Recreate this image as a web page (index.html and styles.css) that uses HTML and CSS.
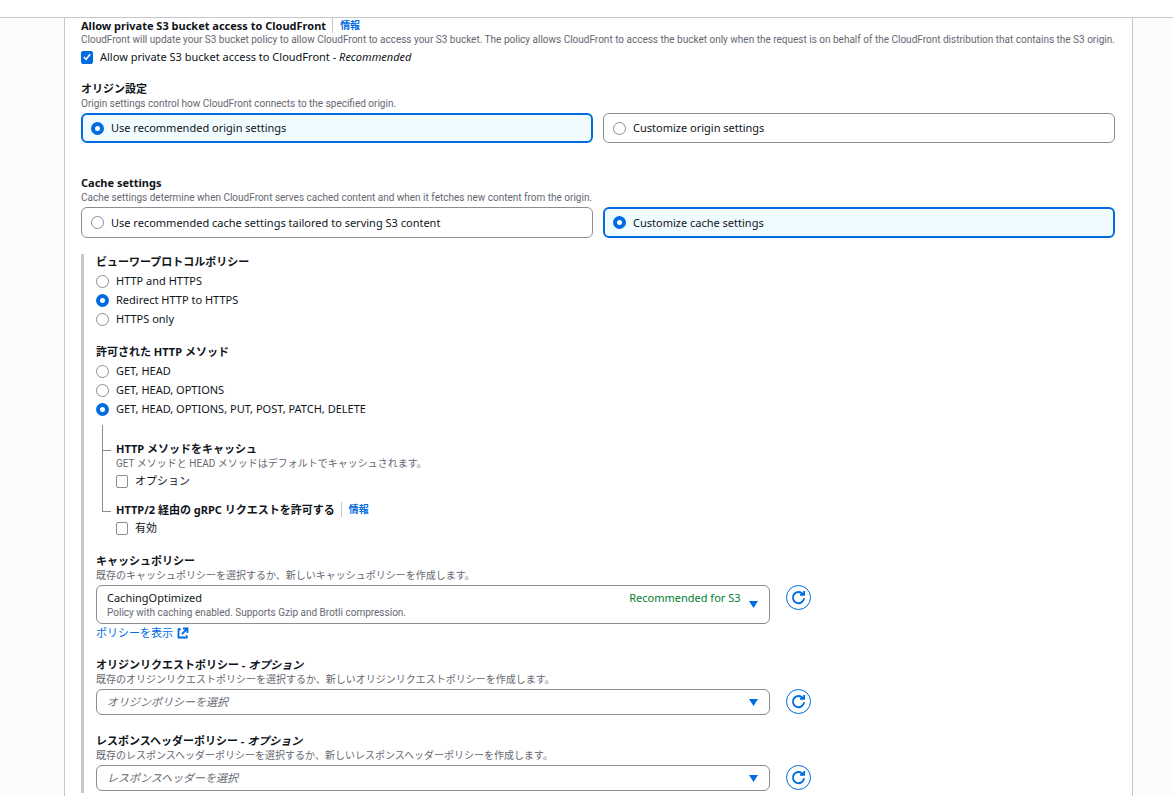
FILE: index.html
```html
<!DOCTYPE html>
<html lang="ja">
<head>
<meta charset="utf-8">
<meta name="viewport" content="width=device-width, initial-scale=1">
<title>CloudFront</title>
<link rel="stylesheet" href="styles.css">
</head>
<body>
<svg class="sprite" aria-hidden="true">
  <symbol id="refresh" viewBox="0 0 16 16"><path d="M14 8.8A6 6 0 1 1 12.6 4.2L14 5M14 1V5.2H9.6" fill="none" stroke="currentColor" stroke-width="2"/></symbol>
  <symbol id="external" viewBox="0 0 16 16"><path d="M5 3H2v11h11v-3M8 2h6v6M14 2L6.5 9.5" fill="none" stroke="currentColor" stroke-width="2.4"/></symbol>
</svg>
<header class="topbar"></header>
<main class="panel">
  <section class="field">
    <div class="heading"><h2 class="title">Allow private S3 bucket access to CloudFront</h2><a class="info" href="#">情報</a></div>
    <p class="desc">CloudFront will update your S3 bucket policy to allow CloudFront to access your S3 bucket. The policy allows CloudFront to access the bucket only when the request is on behalf of the CloudFront distribution that contains the S3 origin.</p>
    <label class="choice control"><input class="check" type="checkbox" checked><span>Allow private S3 bucket access to CloudFront - <em>Recommended</em></span></label>
  </section>

  <section class="field">
    <h2 class="title">オリジン設定</h2>
    <p class="desc">Origin settings control how CloudFront connects to the specified origin.</p>
    <div class="tiles control">
      <label class="tile choice tile-on"><input class="radio" type="radio" name="origin" checked><span>Use recommended origin settings</span></label>
      <label class="tile choice"><input class="radio" type="radio" name="origin"><span>Customize origin settings</span></label>
    </div>
  </section>

  <section class="field field-cache">
    <h2 class="title">Cache settings</h2>
    <p class="desc">Cache settings determine when CloudFront serves cached content and when it fetches new content from the origin.</p>
    <div class="tiles control">
      <label class="tile choice"><input class="radio" type="radio" name="cache"><span>Use recommended cache settings tailored to serving S3 content</span></label>
      <label class="tile choice tile-on"><input class="radio" type="radio" name="cache" checked><span>Customize cache settings</span></label>
    </div>
  </section>

  <div class="nested">
    <section class="field">
      <h3 class="title">ビューワープロトコルポリシー</h3>
      <div class="options control">
        <label class="choice"><input class="radio" type="radio" name="viewer"><span>HTTP and HTTPS</span></label>
        <label class="choice"><input class="radio" type="radio" name="viewer" checked><span>Redirect HTTP to HTTPS</span></label>
        <label class="choice"><input class="radio" type="radio" name="viewer"><span>HTTPS only</span></label>
      </div>
    </section>

    <section class="field">
      <h3 class="title">許可された HTTP メソッド</h3>
      <div class="options control">
        <label class="choice"><input class="radio" type="radio" name="method"><span>GET, HEAD</span></label>
        <label class="choice"><input class="radio" type="radio" name="method"><span>GET, HEAD, OPTIONS</span></label>
        <label class="choice"><input class="radio" type="radio" name="method" checked><span>GET, HEAD, OPTIONS, PUT, POST, PATCH, DELETE</span></label>
      </div>
      <ul class="tree">
        <li class="branch">
          <h4 class="title">HTTP メソッドをキャッシュ</h4>
          <p class="desc">GET メソッドと HEAD メソッドはデフォルトでキャッシュされます。</p>
          <label class="choice control"><input class="check" type="checkbox"><span>オプション</span></label>
        </li>
        <li class="branch">
          <div class="heading"><h4 class="title">HTTP/2 経由の gRPC リクエストを許可する</h4><a class="info" href="#">情報</a></div>
          <label class="choice control"><input class="check" type="checkbox"><span>有効</span></label>
        </li>
      </ul>
    </section>

    <section class="field">
      <h3 class="title" id="cache-policy">キャッシュポリシー</h3>
      <p class="desc">既存のキャッシュポリシーを選択するか、新しいキャッシュポリシーを作成します。</p>
      <div class="picker control">
        <button class="select rich" type="button" aria-haspopup="listbox" aria-labelledby="cache-policy">
          <span class="rich-text"><span class="rich-top"><span>CachingOptimized</span><span class="tag">Recommended for S3</span></span><span class="rich-desc">Policy with caching enabled. Supports Gzip and Brotli compression.</span></span>
          <svg class="caret" viewBox="0 0 9 7" aria-hidden="true"><path d="M0 0h9L4.5 7z" fill="currentColor"/></svg>
        </button>
        <button class="refresh" type="button" aria-label="更新"><svg class="icon" aria-hidden="true"><use href="#refresh"/></svg></button>
      </div>
      <a class="link" href="#">ポリシーを表示<svg class="link-icon" aria-hidden="true"><use href="#external"/></svg></a>
    </section>

    <section class="field field-policy">
      <h3 class="title"><label for="request-policy">オリジンリクエストポリシー - <em>オプション</em></label></h3>
      <p class="desc">既存のオリジンリクエストポリシーを選択するか、新しいオリジンリクエストポリシーを作成します。</p>
      <div class="picker control">
        <select class="select plain" id="request-policy"><option>オリジンポリシーを選択</option></select>
        <button class="refresh" type="button" aria-label="更新"><svg class="icon" aria-hidden="true"><use href="#refresh"/></svg></button>
      </div>
    </section>

    <section class="field field-policy">
      <h3 class="title"><label for="response-policy">レスポンスヘッダーポリシー - <em>オプション</em></label></h3>
      <p class="desc">既存のレスポンスヘッダーポリシーを選択するか、新しいレスポンスヘッダーポリシーを作成します。</p>
      <div class="picker control">
        <select class="select plain" id="response-policy"><option>レスポンスヘッダーを選択</option></select>
        <button class="refresh" type="button" aria-label="更新"><svg class="icon" aria-hidden="true"><use href="#refresh"/></svg></button>
      </div>
    </section>
  </div>
</main>
</body>
</html>
```
FILE: styles.css
```css
* { box-sizing: border-box; }

html { overflow: hidden; }

body {
  margin: 0;
  min-height: 100vh;
  display: flex;
  flex-direction: column;
  background: #fcfcfd;
  color: #0f141a;
  font: 11px/16px "Noto Sans", "Noto Sans CJK JP", sans-serif;
}

button, select, input { font: inherit; color: inherit; margin: 0; }
h2, h3, h4, p, ul { margin: 0; padding: 0; }

.sprite { position: absolute; width: 0; height: 0; }

.topbar {
  height: 18px;
  flex: none;
  background: #fff;
  border-bottom: 1px solid #c6c6cd;
}

.panel {
  flex: 1;
  margin: 0 40px 0 64px;
  padding: 0 17px 4px 16px;
  background: #fff;
  border: solid #c6c6cd;
  border-width: 0 1px;
}

.field { padding-bottom: 16px; }
.field-cache { padding-top: 16px; }
.field-policy { padding-bottom: 18px; }

.heading { display: flex; align-items: center; }
.title { font-size: 11px; line-height: 16px; font-weight: 700; }
.heading .title { line-height: 15px; }

.info {
  margin-left: 6px;
  padding-left: 7px;
  border-left: 1px solid #c6c6cd;
  color: #006ce0;
  font-size: 10px;
  line-height: 15px;
  font-weight: 700;
  text-decoration: none;
}

.desc, .rich-desc {
  color: #656871;
  font-family: Roboto, "Noto Sans CJK JP", sans-serif;
  font-size: 10px;
  line-height: 13px;
}
.control { margin-top: 3px; }
.choice { display: flex; align-items: center; gap: 7px; }

.check, .radio {
  appearance: none;
  flex: none;
  height: 13px;
  border: 1px solid #8c8c94;
  background: #fff;
}
.check { width: 12px; border-radius: 2px; }
.radio { width: 13px; border-radius: 50%; }
.radio:checked { border: 4px solid #006ce0; }
.check:checked {
  border-color: #006ce0;
  background: #006ce0 url("data:image/svg+xml,%3Csvg xmlns='http://www.w3.org/2000/svg' viewBox='0 0 11 11'%3E%3Cpath d='M2 5.5L4.5 8L9 2.5' fill='none' stroke='white' stroke-width='1.7'/%3E%3C/svg%3E") no-repeat center / 100%;
}

.tiles { display: grid; grid-template-columns: 1fr 1fr; gap: 10px; }
.tile {
  height: 30px;
  padding: 0 9px;
  border: 1px solid #8c8c94;
  border-radius: 6px;
}
.field-cache .tile { height: 31px; }
.tile-on { padding: 0 8px; border: 2px solid #006ce0; background: #f0fbff; }

.nested { padding: 0 0 2px 12px; border-left: 3px solid #c6c6cd; }
.nested > .field:last-child { padding-bottom: 0; }
.options { display: grid; gap: 3px; padding-bottom: 1px; }

.tree { list-style: none; margin: 7px 0 0 6px; padding: 16px 0 1px; }
.branch { position: relative; padding: 0 0 13px 14px; }
.branch:last-child { padding-bottom: 0; }
.branch::before {
  content: "";
  position: absolute;
  left: 0;
  top: -16px;
  width: 8px;
  height: 25px;
  border: solid #8c8c94;
  border-width: 0 0 1px 1px;
}
.branch:last-child::before { top: -52px; height: 61px; }

.picker { display: flex; align-items: flex-start; gap: 16px; }
.select {
  width: 66.1%;
  border: 1px solid #8c8c94;
  border-radius: 6px;
  background-color: #fff;
  text-align: left;
}
.rich { display: flex; align-items: center; gap: 8px; padding: 4px 11px 4px 10px; }
.rich-text { flex: 1; }
.rich-top { display: flex; justify-content: space-between; }
.rich-desc { display: block; }
.tag { color: #00802f; }
.caret { width: 9px; height: 7px; color: #006ce0; }

.plain {
  appearance: none;
  height: 26px;
  padding: 0 30px 0 10px;
  color: #656871;
  font-style: italic;
  background: #fff url("data:image/svg+xml,%3Csvg xmlns='http://www.w3.org/2000/svg' viewBox='0 0 9 7'%3E%3Cpath d='M0 0h9L4.5 7z' fill='%23006ce0'/%3E%3C/svg%3E") no-repeat right 11px center / 9px 7px;
}

.refresh {
  display: grid;
  place-items: center;
  width: 25px;
  height: 25px;
  padding: 0;
  border: 1px solid #006ce0;
  border-radius: 50%;
  background: #fff;
  color: #006ce0;
}
.icon { width: 15px; height: 15px; }

.link {
  display: flex;
  align-items: center;
  gap: 4px;
  width: fit-content;
  margin-top: 1px;
  color: #006ce0;
  text-decoration: none;
}
.link-icon { width: 12px; height: 12px; }
```
